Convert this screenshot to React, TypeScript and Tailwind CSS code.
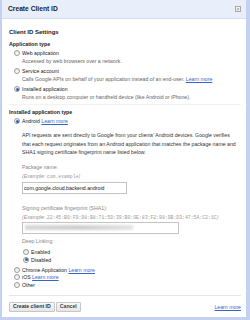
const Radio = ({ checked = false }: { checked?: boolean }) => (
  <span className="w-[6px] h-[6px] rounded-full border border-[#9a9a9a] bg-gradient-to-b from-[#e6e6e6] to-white flex items-center justify-center shrink-0">
    {checked && <span className="w-[3px] h-[3px] rounded-full bg-[#2f5fbf]" />}
  </span>
);

const Link = ({ children }: { children: React.ReactNode }) => (
  <span className="text-[#3366cc] underline">{children}</span>
);

export default function App() {
  return (
    <div className="w-[250px] h-[320px] bg-[#c5d1f3] pl-[2px] pr-[4px] pb-[3px] font-['Liberation_Sans',Arial,sans-serif] text-[#222] text-[5.2px] leading-[8px]">
      <div className="h-full bg-white flex flex-col">
        <div className="h-[19px] bg-[#e8eefa] border-b border-[#d3dcf3] flex items-center justify-between pl-[6px] pr-[5px]">
          <span className="font-bold text-[6.7px]">Create Client ID</span>
          <span className="w-[6px] h-[6px] border border-[#a9a9a9] bg-[#f4f4f4] flex items-center justify-center text-[#7a7a7a] text-[5px] leading-none">×</span>
        </div>
        <div className="flex-1 flex flex-col pl-[7px] pr-[5px]">
          <div className="mt-[9px] h-[8px] font-bold text-[6px]">Client ID Settings</div>
          <div className="mt-[4px] h-[8px] font-bold text-[5.3px]">Application type</div>
          <div className="pl-[5px] flex flex-col">
            <div className="mt-[1px] h-[8px] flex items-center gap-[2px]"><Radio /><span>Web application</span></div>
            <div className="h-[8px] pl-[8px] text-[#666]">Accessed by web browsers over a network.</div>
            <div className="mt-[2px] h-[8px] flex items-center gap-[2px]"><Radio /><span>Service account</span></div>
            <div className="h-[8px] pl-[8px] text-[#666]">Calls Google APIs on behalf of your application instead of an end-user. <Link>Learn more</Link></div>
            <div className="mt-[2px] h-[8px] flex items-center gap-[2px]"><Radio checked /><span>Installed application</span></div>
            <div className="h-[8px] pl-[8px] text-[#666]">Runs on a desktop computer or handheld device (like Android or iPhone).</div>
          </div>
          <div className="mt-[3px] border-t border-[#f2f2f2]" />
          <div className="mt-[3px] h-[8px] font-bold text-[5.3px]">Installed application type</div>
          <div className="pl-[5px] flex flex-col">
            <div className="mt-[1px] h-[8px] flex items-center gap-[2px]"><Radio checked /><span>Android <Link>Learn more</Link></span></div>
            <div className="pl-[8px] flex flex-col">
              <p className="mt-[6px] whitespace-nowrap leading-[8.5px] text-[#333]">API requests are sent directly to Google from your clients' Android devices. Google verifies<br />that each request originates from an Android application that matches the package name and<br />SHA1 signing certificate fingerprint name listed below.</p>
              <div className="mt-[6px] h-[8px] text-[#888]">Package name:</div>
              <div className="mt-[1px] h-[8px] text-[#999]"><i>(Example: </i><span className="font-['Liberation_Mono',monospace] text-[4.8px]">com.example</span><i>)</i></div>
              <div className="mt-[2px] w-[105px] h-[12px] border border-[#c3c3c3] flex items-center px-[1px] text-[#222]">com.google.cloud.backend.android</div>
              <div className="mt-[10px] h-[8px] text-[#888]">Signing certificate fingerprint (SHA1):</div>
              <div className="mt-[1px] h-[8px] text-[#999] whitespace-nowrap"><i>(Example: </i><span className="font-['Liberation_Mono',monospace] text-[4.8px]">22:45:B0:F9:98:B8:71:5D:39:B0:0E:83:F2:98:9B:D3:47:5A:C2:1C</span><i>)</i></div>
              <div className="mt-[1px] w-[157px] h-[12px] border border-[#c3c3c3] flex items-center px-[2px]">
                <div className="w-[108px] h-[5px] bg-gradient-to-r from-[#d9d9d9] via-[#cfcfcf] to-[#e4e4e4] blur-[1px]" />
              </div>
              <div className="mt-[3px] h-[8px] text-[#888]">Deep Linking:</div>
              <div className="pl-[1px] flex flex-col">
                <div className="mt-[3px] h-[8px] flex items-center gap-[2px]"><Radio /><span>Enabled</span></div>
                <div className="h-[8px] flex items-center gap-[2px]"><Radio checked /><span>Disabled</span></div>
              </div>
            </div>
            <div className="mt-[2px] h-[8px] flex items-center gap-[2px]"><Radio /><span>Chrome Application <Link>Learn more</Link></span></div>
            <div className="h-[7.5px] flex items-center gap-[2px]"><Radio /><span>iOS <Link>Learn more</Link></span></div>
            <div className="h-[7.5px] flex items-center gap-[2px]"><Radio /><span>Other</span></div>
          </div>
          <div className="mt-[6px] border-t border-[#e6e6e6]" />
          <div className="mt-[6px] flex items-end justify-between">
            <div className="flex gap-[1px]">
              <button className="h-[10px] px-[3px] border border-[#c6c6c6] rounded-[1px] bg-gradient-to-b from-[#f8f8f8] to-[#e6e6e6] font-bold text-[5.2px] leading-none text-[#333]">Create client ID</button>
              <button className="h-[10px] px-[3px] border border-[#c6c6c6] rounded-[1px] bg-gradient-to-b from-[#f8f8f8] to-[#e6e6e6] font-bold text-[5.2px] leading-none text-[#444]">Cancel</button>
            </div>
            <span className="text-[#3366cc] underline leading-none mb-[1px]">Learn more</span>
          </div>
        </div>
      </div>
    </div>
  );
}
